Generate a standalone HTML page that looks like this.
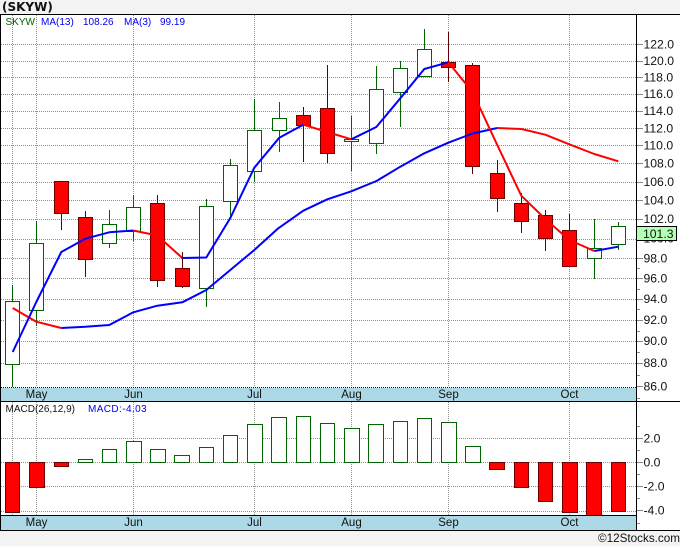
<!DOCTYPE html>
<html>
<head>
<meta charset="utf-8">
<style>
html,body{margin:0;padding:0;background:#f3f3f3;width:680px;height:546px;overflow:hidden}
svg{display:block;position:absolute;left:0;top:0}
text{font-family:"Liberation Sans",sans-serif}
</style>
</head>
<body>
<svg width="680" height="546" viewBox="0 0 680 546" xmlns="http://www.w3.org/2000/svg">
<rect x="0" y="0" width="680" height="546" fill="#f3f3f3"/>
<rect x="0" y="15" width="680" height="515" fill="#fff"/>
<text x="2" y="11" style="font-family:'DejaVu Sans',sans-serif;font-weight:bold;font-size:12px" fill="#111">(SKYW)</text>

<!-- grid -->
<g shape-rendering="crispEdges" stroke="#909090" stroke-width="1" stroke-dasharray="1 1" fill="none">
<path d="M1 44.5H636M1 61.5H636M1 77.5H636M1 94.5H636M1 111.5H636M1 128.5H636M1 145.5H636M1 163.5H636M1 182.5H636M1 200.5H636M1 219.5H636M1 239.5H636M1 258.5H636M1 278.5H636M1 299.5H636M1 320.5H636M1 341.5H636M1 363.5H636"/>
<path d="M12.5 15V387M36.5 15V387M133.5 15V387M254.5 15V387M351.5 15V387M448.5 15V387M569.5 15V387"/>
<path d="M1 438.5H636M1 462.5H636M1 486.5H636M1 511.5H636"/>
<path d="M12.5 402V515M36.5 402V515M133.5 402V515M254.5 402V515M351.5 402V515M448.5 402V515M569.5 402V515"/>
</g>

<!-- wicks -->
<g shape-rendering="crispEdges" fill="none" stroke-width="1">
<path stroke="#006400" d="M12.5 285V387M36.5 221V326M109.5 210V248M133.5 195V241M206.5 199V307M230.5 159V218M254.5 99V182M279.5 102V152M351.5 116V171M376.5 66V154M400.5 61V127M424.5 29V77M594.5 219V279M618.5 222V250"/>
<path stroke="#5c0000" d="M61.5 181V230M85.5 211V277M157.5 195V287M182.5 252V288M303.5 107V162M327.5 65V163M448.5 32V82M472.5 63V174M497.5 160V212M521.5 193V233M545.5 210V251M569.5 214V267"/>
</g>

<!-- green bodies -->
<g shape-rendering="crispEdges" fill="#fff" stroke="#006400" stroke-width="1">
<rect x="5.5" y="301.5" width="14" height="63"/>
<rect x="29.5" y="243.5" width="14" height="67"/>
<rect x="102.5" y="224.5" width="14" height="19"/>
<rect x="126.5" y="207.5" width="14" height="24"/>
<rect x="199.5" y="206.5" width="14" height="82"/>
<rect x="223.5" y="165.5" width="14" height="36"/>
<rect x="247.5" y="130.5" width="14" height="41"/>
<rect x="272.5" y="118.5" width="14" height="12"/>
<rect x="344.5" y="139.5" width="14" height="2"/>
<rect x="369.5" y="89.5" width="14" height="54"/>
<rect x="393.5" y="68.5" width="14" height="24"/>
<rect x="417.5" y="49.5" width="14" height="27"/>
<rect x="587.5" y="248.5" width="14" height="10"/>
<rect x="611.5" y="226.5" width="14" height="18"/>
</g>
<!-- red bodies -->
<g shape-rendering="crispEdges" fill="#f00" stroke="#6e0000" stroke-width="1">
<rect x="54.5" y="181.5" width="14" height="32"/>
<rect x="78.5" y="217.5" width="14" height="42"/>
<rect x="150.5" y="203.5" width="14" height="77"/>
<rect x="175.5" y="268.5" width="14" height="18"/>
<rect x="296.5" y="115.5" width="14" height="10"/>
<rect x="320.5" y="108.5" width="14" height="45"/>
<rect x="441.5" y="62.5" width="14" height="5"/>
<rect x="465.5" y="65.5" width="14" height="101"/>
<rect x="490.5" y="173.5" width="14" height="25"/>
<rect x="514.5" y="203.5" width="14" height="18"/>
<rect x="538.5" y="215.5" width="14" height="23"/>
<rect x="562.5" y="230.5" width="14" height="36"/>
</g>

<!-- moving averages -->
<g fill="none" stroke-width="2" stroke-linejoin="round">
<path stroke="#f00" d="M12.7 308L36.3 321.7L61.3 328"/>
<path stroke="#00f" d="M61.3 328L85.3 326.8L109.3 325L133.3 312.3L157.3 305.7L182.3 302.3L206.3 290L230.3 270L254.3 250L278.3 228.3L303.3 210.7L327.3 199.3L351.3 191.3L376.5 181L400.3 166.7L424.3 153.3L448.3 142.7L472.5 133.5L497.3 128"/>
<path stroke="#f00" d="M497.3 128L521.3 129L545.3 134.7L569.3 144.3L594.3 154L618.3 161.3"/>
<path stroke="#00f" d="M12.7 352L36.3 302L61.3 252L85.3 238.7L109.3 232.3L133.3 230.5"/>
<path stroke="#f00" d="M133.3 230.5L157.3 235.5L182.3 258"/>
<path stroke="#00f" d="M182.3 258L206.3 257.5L230.3 218L254.3 167.7L279.3 137.7L303.3 124.7"/>
<path stroke="#f00" d="M303.3 124.7L327.3 132L351.3 139.3"/>
<path stroke="#00f" d="M351.3 139.3L376.3 127L400.3 98.3L424.3 69L448.3 62.3"/>
<path stroke="#f00" d="M448.3 62.3L472.5 92L497.5 145.5L521.3 195.7L545.3 219L569.3 240L594.3 251"/>
<path stroke="#00f" d="M594.3 251L618.3 246.7"/>
</g>

<!-- MACD bars -->
<g shape-rendering="crispEdges" fill="#f00" stroke="#6e0000" stroke-width="1">
<rect x="5.5" y="462.5" width="14" height="50"/>
<rect x="29.5" y="462.5" width="15" height="25"/>
<rect x="54.5" y="462.5" width="14" height="4"/>
<rect x="489.5" y="462.5" width="15" height="7"/>
<rect x="514.5" y="462.5" width="14" height="25"/>
<rect x="538.5" y="462.5" width="14" height="39"/>
<rect x="562.5" y="462.5" width="15" height="50"/>
<rect x="586.5" y="462.5" width="15" height="53"/>
<rect x="611.5" y="462.5" width="14" height="49"/>
</g>
<g shape-rendering="crispEdges" fill="#fff" stroke="#006400" stroke-width="1">
<rect x="78.5" y="459.5" width="14" height="3"/>
<rect x="102.5" y="449.5" width="14" height="13"/>
<rect x="126.5" y="441.5" width="15" height="21"/>
<rect x="150.5" y="449.5" width="15" height="13"/>
<rect x="174.5" y="455.5" width="15" height="7"/>
<rect x="199.5" y="447.5" width="14" height="15"/>
<rect x="223.5" y="435.5" width="14" height="27"/>
<rect x="247.5" y="424.5" width="15" height="38"/>
<rect x="271.5" y="417.5" width="15" height="45"/>
<rect x="296.5" y="416.5" width="14" height="46"/>
<rect x="320.5" y="423.5" width="14" height="39"/>
<rect x="344.5" y="428.5" width="15" height="34"/>
<rect x="368.5" y="424.5" width="15" height="38"/>
<rect x="393.5" y="421.5" width="14" height="41"/>
<rect x="417.5" y="418.5" width="14" height="44"/>
<rect x="441.5" y="422.5" width="15" height="40"/>
<rect x="465.5" y="446.5" width="15" height="16"/>
</g>

<!-- bands -->
<g shape-rendering="crispEdges">
<rect x="0" y="388" width="636" height="13" fill="#add8e6"/>
<rect x="0" y="516" width="636" height="14" fill="#add8e6"/>
<path d="M1 387.5H636" stroke="#111" stroke-width="1" stroke-dasharray="1 1" fill="none"/>
<path d="M0 14.5H680M0 401.5H680M0 530.5H680M0 515.5H636" stroke="#000" stroke-width="1" fill="none"/>
<path d="M636.5 14V531M0.5 14V531" stroke="#000" stroke-width="1" fill="none"/>
<!-- ticks -->
<path stroke="#888" stroke-width="1" fill="none" d="M637 44.5H643M637 61.5H643M637 77.5H643M637 94.5H643M637 111.5H643M637 128.5H643M637 145.5H643M637 163.5H643M637 182.5H643M637 200.5H643M637 219.5H643M637 258.5H643M637 278.5H643M637 299.5H643M637 320.5H643M637 341.5H643M637 363.5H643M637 386.5H643M637 268.5H640M637 289.5H640M637 309.5H640M637 331.5H640M637 352.5H640M637 375.5H640M637 398.5H640M637 438.5H643M637 462.5H643M637 486.5H643M637 510.5H643M637 426.5H640M637 450.5H640M637 474.5H640M637 498.5H640M637 523.5H640"/>
</g>

<!-- labels -->
<g font-size="10" >
<text x="5.5" y="25" fill="#006400">SKYW</text>
<text x="41" y="25" fill="#0000ee">MA(13)</text>
<text x="83" y="25" fill="#0000ee">108.26</text>
<text x="124" y="25" fill="#0000ee">MA(3)</text>
<text x="160" y="25" fill="#0000ee">99.19</text>
<text x="5.5" y="412" fill="#111">MACD(26,12,9)</text>
<text x="88" y="412" fill="#0000ee" letter-spacing=".4">MACD:-4.03</text>
</g>
<g font-size="11.5" fill="#111" text-anchor="middle">
<text x="36.5" y="398">May</text><text x="133.5" y="398">Jun</text><text x="254.5" y="398">Jul</text><text x="351.5" y="398">Aug</text><text x="448.5" y="398">Sep</text><text x="569.5" y="398">Oct</text>
<text x="36.5" y="526">May</text><text x="133.5" y="526">Jun</text><text x="254.5" y="526">Jul</text><text x="351.5" y="526">Aug</text><text x="448.5" y="526">Sep</text><text x="569.5" y="526">Oct</text>
</g>
<g font-size="12.2" fill="#111">
<text x="643.5" y="48.5">122.0</text><text x="643.5" y="65">120.0</text><text x="643.5" y="81.5">118.0</text><text x="643.5" y="98">116.0</text><text x="643.5" y="115">114.0</text><text x="643.5" y="132.5">112.0</text><text x="643.5" y="149.5">110.0</text><text x="643.5" y="167.5">108.0</text><text x="643.5" y="186">106.0</text><text x="643.5" y="204.5">104.0</text><text x="643.5" y="223">102.0</text><text x="643.5" y="242.5">100.0</text>
<text x="643.5" y="262.5">98.0</text><text x="643.5" y="282.5">96.0</text><text x="643.5" y="303">94.0</text><text x="643.5" y="324">92.0</text><text x="643.5" y="345">90.0</text><text x="643.5" y="367">88.0</text><text x="643.5" y="390.5">86.0</text>
<text x="643.5" y="442.5">2.0</text><text x="643.5" y="466.5">0.0</text><text x="643.5" y="490.5">-2.0</text><text x="643.5" y="514.5">-4.0</text>
</g>
<rect x="636.5" y="226.5" width="40" height="14" fill="#b3ffb3" stroke="#000" stroke-width="1" shape-rendering="crispEdges"/>
<text x="643" y="238" font-size="12.2" fill="#111">101.3</text>
<text x="680" y="542" font-size="11.7" fill="#111" text-anchor="end">©12Stocks.com</text>
</svg>
</body>
</html>
